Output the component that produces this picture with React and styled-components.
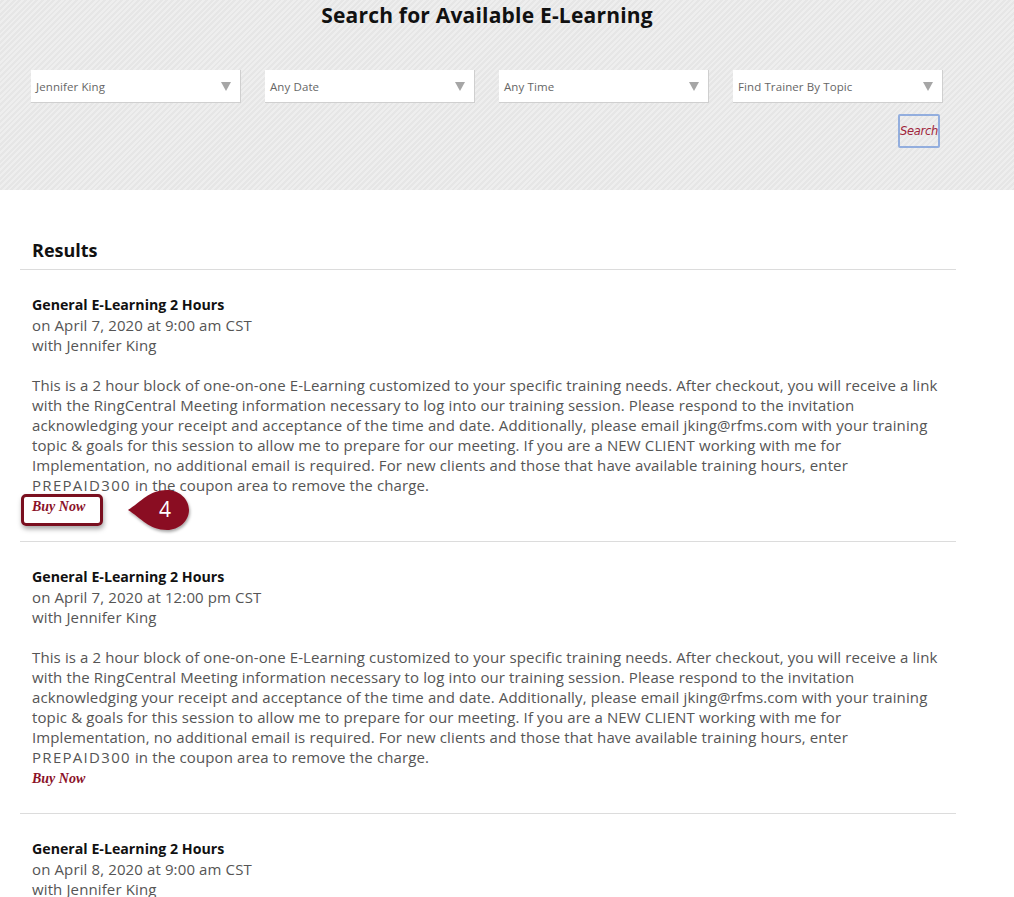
import React from 'react';
import styled, { createGlobalStyle } from 'styled-components';

const GlobalStyle = createGlobalStyle`
  body {
    margin: 0;
    background: #fff;
    font-family: "Open Sans", "Liberation Sans", sans-serif;
    color: #555;
  }
`;

const SearchPanel = styled.div`
  height: 190px;
  box-sizing: border-box;
  padding: 1px 71px 0 31px;
  background: repeating-linear-gradient(
    -45deg,
    #e6e6e6 0px,
    #e6e6e6 2px,
    #eeeeee 2px,
    #eeeeee 4px
  );
`;

const Title = styled.h1`
  margin: 0;
  text-align: center;
  font-size: 21px;
  font-weight: 700;
  color: #111;
  line-height: 28px;
  letter-spacing: 0.2px;
`;

const Filters = styled.div`
  display: grid;
  grid-template-columns: repeat(4, 210px);
  column-gap: 24px;
  margin-top: 41px;
`;

const Select = styled.div`
  height: 33px;
  box-sizing: border-box;
  background: #fff;
  border-right: 1px solid #cfcfcf;
  border-bottom: 1px solid #cfcfcf;
  display: flex;
  align-items: center;
  justify-content: space-between;
  padding: 0 9px 0 5px;
  font-size: 11.5px;
  letter-spacing: 0.1px;
  color: #666;
`;

const Caret = styled.span`
  width: 0;
  height: 0;
  border-left: 5px solid transparent;
  border-right: 5px solid transparent;
  border-top: 9px solid #a6a6a6;
`;

const SearchRow = styled.div`
  display: flex;
  justify-content: flex-end;
  margin-top: 11px;
  padding-right: 3px;
`;

const SearchButton = styled.button`
  width: 42px;
  height: 34px;
  padding: 0;
  box-sizing: border-box;
  border: 2px solid #93aede;
  border-radius: 2px;
  background: transparent;
  font-family: "DejaVu Sans", sans-serif;
  font-style: italic;
  font-size: 11.5px;
  color: #a0243a;
  letter-spacing: -0.3px;
`;

const Results = styled.div`
  width: 936px;
  margin: 48px 0 0 20px;
`;

const ResultsHead = styled.h2`
  margin: 0;
  padding: 0 12px 7px;
  font-size: 18px;
  font-weight: 700;
  color: #111;
  line-height: 24px;
  border-bottom: 1px solid #dcdcdc;
`;

const Session = styled.div`
  padding: 25px 12px 26px;
  border-bottom: 1px solid #dcdcdc;
  font-size: 15px;
  line-height: 20px;
  letter-spacing: 0.12px;
  color: #555;
`;

const SessionName = styled.div`
  font-size: 14.2px;
  font-weight: 700;
  color: #111;
  letter-spacing: 0;
`;

const Description = styled.p`
  margin: 20px 0 0;
  width: 914px;
`;

// coupon codes get the wide caps spacing
const Coupon = styled.span`
  letter-spacing: 1.3px;
`;

const BuyRow = styled.div`
  position: relative;
  height: 20px;
`;

const BuyLink = styled.a`
  font-family: "Liberation Serif", serif;
  font-style: italic;
  font-weight: 700;
  font-size: 14px;
  letter-spacing: 0;
  color: #8b1228;
  text-decoration: none;
  cursor: pointer;
`;

const Highlight = styled.span`
  position: absolute;
  left: -11px;
  top: -1px;
  width: 82px;
  height: 32px;
  box-sizing: border-box;
  border: 3px solid #7a0f1f;
  border-radius: 5px;
  box-shadow: 1px 3px 5px rgba(0, 0, 0, 0.35);
  pointer-events: none;
`;

const Marker = styled.svg`
  position: absolute;
  left: 95px;
  top: -7px;
  overflow: visible;
`;

const sessions = [
  { date: 'April 7, 2020 at 9:00 am CST', marked: true },
  { date: 'April 7, 2020 at 12:00 pm CST' },
  { date: 'April 8, 2020 at 9:00 am CST' },
];

const blurb =
  'This is a 2 hour block of one-on-one E-Learning customized to your specific training needs. After checkout, you will receive a link with the RingCentral Meeting information necessary to log into our training session. Please respond to the invitation acknowledging your receipt and acceptance of the time and date. Additionally, please email jking@rfms.com with your training topic & goals for this session to allow me to prepare for our meeting. If you are a NEW CLIENT working with me for Implementation, no additional email is required. For new clients and those that have available training hours, enter ';

function StepMarker({ n }) {
  return (
    <Marker width="64" height="44" viewBox="0 0 64 44">
      <defs>
        <filter id="mk-shadow" x="-20%" y="-20%" width="150%" height="160%">
          <feDropShadow dx="1" dy="2" stdDeviation="1.6" floodColor="#000" floodOpacity="0.35" />
        </filter>
      </defs>
      <path
        d="M1 22 C14 14 22 2 40 2 C52 2 62 11 62 22 C62 33 52 42 40 42 C22 42 14 30 1 22 Z"
        fill="#8a0f22"
        filter="url(#mk-shadow)"
      />
      <text
        x="38"
        y="29"
        textAnchor="middle"
        fill="#fff"
        fontSize="21"
        fontFamily="Open Sans, sans-serif"
      >
        {n}
      </text>
    </Marker>
  );
}

function SessionItem({ date, marked }) {
  return (
    <Session>
      <SessionName>General E-Learning 2 Hours</SessionName>
      <div>on {date}</div>
      <div>with Jennifer King</div>
      <Description>
        {blurb}
        <Coupon>PREPAID300</Coupon> in the coupon area to remove the charge.
      </Description>
      <BuyRow>
        <BuyLink>Buy Now</BuyLink>
        {marked && <Highlight />}
        {marked && <StepMarker n={4} />}
      </BuyRow>
    </Session>
  );
}

export default function App() {
  return (
    <>
      <GlobalStyle />
      <SearchPanel>
        <Title>Search for Available E-Learning</Title>
        <Filters>
          {['Jennifer King', 'Any Date', 'Any Time', 'Find Trainer By Topic'].map((label) => (
            <Select key={label}>
              {label}
              <Caret />
            </Select>
          ))}
        </Filters>
        <SearchRow>
          <SearchButton>Search</SearchButton>
        </SearchRow>
      </SearchPanel>
      <Results>
        <ResultsHead>Results</ResultsHead>
        {sessions.map((s) => (
          <SessionItem key={s.date} {...s} />
        ))}
      </Results>
    </>
  );
}
